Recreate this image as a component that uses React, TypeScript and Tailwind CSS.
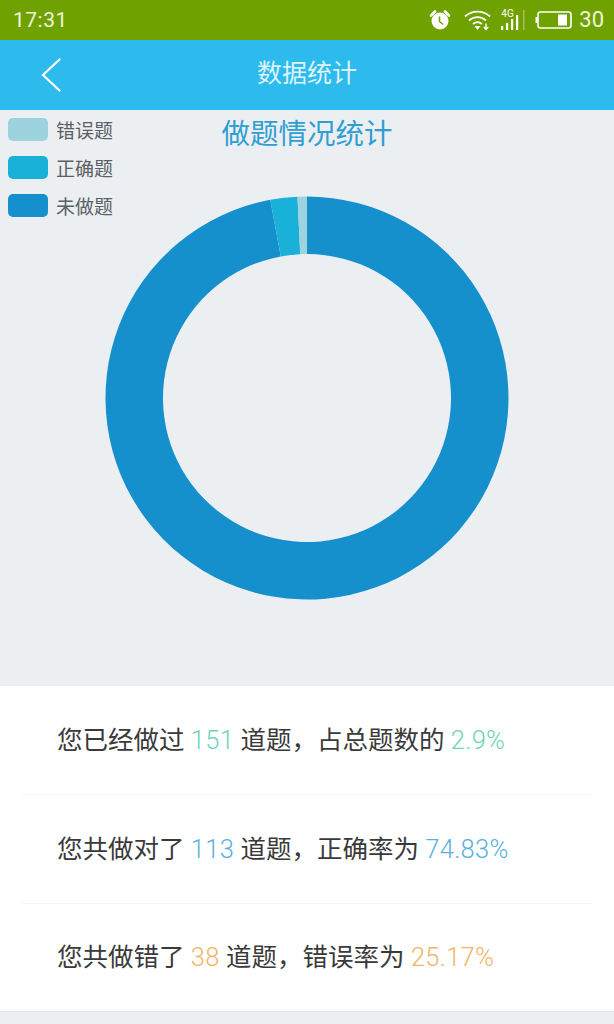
const CX = 202;
const CY = 202;
const R_OUT = 201.5;
const R_IN = 144;

// ring segment between two angles, degrees clockwise from 12 o'clock
const ringPath = (from: number, to: number) => {
  const pt = (r: number, a: number) => {
    const rad = (a * Math.PI) / 180;
    return `${(CX + r * Math.sin(rad)).toFixed(2)} ${(CY - r * Math.cos(rad)).toFixed(2)}`;
  };
  const large = to - from > 180 ? 1 : 0;
  return `M${pt(R_OUT, from)} A${R_OUT} ${R_OUT} 0 ${large} 1 ${pt(R_OUT, to)} L${pt(R_IN, to)} A${R_IN} ${R_IN} 0 ${large} 0 ${pt(R_IN, from)} Z`;
};

const legend = [
  { label: "错误题", color: "bg-[#9dd3df]" },
  { label: "正确题", color: "bg-[#1ab1d9]" },
  { label: "未做题", color: "bg-[#1590cd]" },
];

const cjk = "font-['Roboto','Noto_Sans_CJK_SC',sans-serif]";

const StatusIcons = () => (
  <div className="flex items-center">
    {/* alarm */}
    <svg width="22" height="22" viewBox="0 0 22 22" className="mr-[13px]">
      <circle cx="11" cy="12" r="8.5" fill="#fff" />
      <path d="M2 6.5 L6 2.5 M16 2.5 L20 6.5" stroke="#fff" strokeWidth="2.6" strokeLinecap="round" />
      <path d="M10.5 7.5 V12.5 L14 15.5" stroke="#6fa200" strokeWidth="1.5" fill="none" />
    </svg>
    {/* wifi */}
    <svg width="28" height="22" viewBox="0 0 28 22" className="mr-[7px]">
      <path d="M1 7.5 C8 1 19 1 26 7.5" stroke="#fff" strokeWidth="1.8" fill="none" />
      <path d="M5 11.5 C10 7 17 7 22 11.5" stroke="#fff" strokeWidth="1.8" fill="none" />
      <path d="M9 15 C12 12.5 15 12.5 18 15" stroke="#fff" strokeWidth="1.8" fill="none" />
      <path d="M10.5 17 H16.5 L13.5 21 Z" fill="#fff" />
      <path d="M22 14.5 V20 M19.8 18 L22 20.5 L24.2 18" stroke="#fff" strokeWidth="1.4" fill="none" />
    </svg>
    {/* 4G signal */}
    <div className="relative mr-[8px] h-[22px] w-[28px]">
      <span className="absolute left-[2px] top-0 font-['Roboto',sans-serif] text-[10px] leading-[10px] text-white">4G</span>
      <svg width="28" height="22" viewBox="0 0 28 22" className="absolute left-0 top-0">
        <rect x="2" y="17" width="2.2" height="4" fill="#fff" />
        <rect x="7" y="14" width="2.2" height="7" fill="#fff" />
        <rect x="12" y="10" width="2.2" height="11" fill="#fff" />
        <rect x="17" y="6" width="2.2" height="15" fill="#fff" />
        <rect x="24" y="1" width="1.5" height="20" fill="#fff" opacity="0.35" />
      </svg>
    </div>
    {/* battery */}
    <svg width="37" height="18" viewBox="0 0 37 18" className="mr-[7px]">
      <rect x="0.5" y="6" width="2" height="6" fill="#fff" />
      <rect x="3" y="1" width="33" height="16" rx="2.5" stroke="#fff" strokeWidth="1.6" fill="none" />
      <rect x="23" y="3.5" width="9" height="11" fill="#fff" />
    </svg>
    <span className="font-['Roboto',sans-serif] text-[22px] leading-none text-[#eef5d8]">30</span>
  </div>
);

export default function App() {
  return (
    <div className={`flex h-[1024px] w-[614px] flex-col overflow-hidden bg-[#eceff2] ${cjk}`}>
      <div className="flex h-10 items-center justify-between bg-[#6fa200] pl-[13px] pr-[10px]">
        <span className="text-[21px] leading-none tracking-[0.5px] text-[#eef5d8]">17:31</span>
        <StatusIcons />
      </div>

      <div className="relative flex h-[70px] items-center justify-center bg-[#2dbbee] pb-[3px]">
        <svg width="24" height="36" viewBox="0 0 24 36" className="absolute left-[40px] top-[17px]">
          <path d="M19.5 2.5 L3 18 L19.5 33.5" stroke="#fff" strokeWidth="2.2" fill="none" strokeLinecap="round" />
        </svg>
        <span className="text-[25px] leading-none text-[#dff3fb]">数据统计</span>
      </div>

      <div className="relative flex h-[576px] flex-col items-center">
        <div className="absolute left-2 top-2 flex flex-col gap-[15px]">
          {legend.map((item) => (
            <div key={item.label} className="flex h-[23px] items-center gap-[8px]">
              <div className={`h-[23px] w-10 rounded-[5px] ${item.color}`} />
              <span className="pt-[4px] text-[19px] leading-none text-[#5a6064]">{item.label}</span>
            </div>
          ))}
        </div>
        <h1 className="mt-[9px] h-[32px] text-[28.5px] font-normal leading-[32px] text-[#2f9fd2]">做题情况统计</h1>
        <svg width="404" height="404" viewBox="0 0 404 404" className="mt-[45px]">
          <path d={ringPath(0, 349.5)} fill="#1590cd" />
          <path d={ringPath(349.5, 357.3)} fill="#1ab1d9" />
          <path d={ringPath(357.3, 360)} fill="#9dd3df" />
        </svg>
      </div>

      <div className="flex h-[325px] flex-col bg-white">
        <Row>
          您已经做过 <Num className="text-[#6fd3bb]">151</Num> 道题，占总题数的 <Num className="text-[#6fd3bb]">2.9%</Num>
        </Row>
        <Divider />
        <Row>
          您共做对了 <Num className="text-[#5cafdc]">113</Num> 道题，正确率为 <Num className="text-[#5cafdc]">74.83%</Num>
        </Row>
        <Divider />
        <Row>
          您共做错了 <Num className="text-[#f0b566]">38</Num> 道题，错误率为 <Num className="text-[#f0b566]">25.17%</Num>
        </Row>
      </div>
      <div className="border-t border-[#e2e5e8]" />
    </div>
  );
}

const Row = ({ children }: { children: React.ReactNode }) => (
  <p className="flex-1 whitespace-pre-wrap pl-[57px] pt-px text-[25.5px] leading-[107px] text-[#3a3a3a]">{children}</p>
);

const Num = ({ className, children }: { className: string; children: React.ReactNode }) => (
  <span className={`font-light tracking-[0.3px] ${className}`}>{children}</span>
);

const Divider = () => <div className="mx-[22px] h-px bg-[#f5f6f7]" />;
